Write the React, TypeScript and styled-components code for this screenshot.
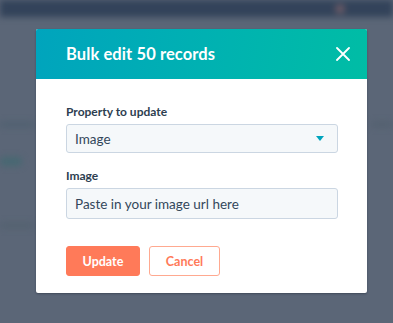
import React from "react";
import styled, { createGlobalStyle } from "styled-components";

const GlobalStyle = createGlobalStyle`
  html, body {
    margin: 0;
    padding: 0;
    background: #5b6677;
  }
  * {
    box-sizing: border-box;
  }
`;

const Screen = styled.div`
  position: relative;
  width: 393px;
  height: 323px;
  overflow: hidden;
  background: #5b6677;
  font-family: "Lato", "Noto Sans", sans-serif;
`;

const BackPage = styled.div`
  display: flex;
  flex-direction: column;
  filter: blur(3px);
`;

const NavBar = styled.div`
  height: 17px;
  background: #33435a;
  display: flex;
  justify-content: flex-end;
  align-items: center;
  padding-right: 48px;
`;

const NavDot = styled.div`
  width: 10px;
  height: 10px;
  border-radius: 50%;
  background: #6a5a66;
`;

const BackRow = styled.div<{ top: number }>`
  margin-top: ${(p) => p.top}px;
  display: flex;
  justify-content: space-between;
`;

const BackBar = styled.div<{ w: number; color: string; h?: number }>`
  width: ${(p) => p.w}px;
  height: ${(p) => p.h ?? 5}px;
  border-radius: 4px;
  background: ${(p) => p.color};
`;

const Overlay = styled.div`
  position: absolute;
  inset: 0;
  padding: 29px 0 0 36px;
`;

const Modal = styled.div`
  width: 331px;
  height: 264px;
  background: #ffffff;
  border-radius: 2px;
  overflow: hidden;
  box-shadow: 0 1px 2px rgba(30, 40, 55, 0.45);
  display: flex;
  flex-direction: column;
`;

const Header = styled.div`
  height: 50px;
  flex-shrink: 0;
  background: linear-gradient(100deg, #00a4bd 0%, #00b1b2 50%, #00bda5 100%);
  display: flex;
  align-items: center;
  justify-content: space-between;
  padding: 0 16px 0 30px;
`;

const Title = styled.h2`
  margin: 0;
  color: #ffffff;
  font-size: 16.5px;
  font-weight: 700;
  letter-spacing: 0.1px;
`;

const CloseButton = styled.button`
  border: none;
  background: transparent;
  padding: 0;
  width: 16px;
  height: 16px;
  display: flex;
  align-items: center;
  justify-content: center;
  cursor: pointer;
`;

const Body = styled.div`
  padding: 25px 29px 0 30px;
  display: flex;
  flex-direction: column;
`;

const Field = styled.div`
  display: flex;
  flex-direction: column;
  margin-bottom: 15px;
`;

const Label = styled.label`
  color: #2d3e50;
  font-size: 12px;
  font-weight: 700;
  margin-bottom: 5px;
  line-height: 15px;
`;

const Box = styled.div<{ h: number }>`
  height: ${(p) => p.h}px;
  background: #f5f8fa;
  border: 1px solid #cbd6e2;
  border-radius: 3px;
  display: flex;
  align-items: center;
  justify-content: space-between;
  padding: 0 11px 0 8px;
  color: #33475b;
  font-size: 13.5px;
`;

const Caret = styled.div`
  width: 0;
  height: 0;
  border-left: 4.5px solid transparent;
  border-right: 4.5px solid transparent;
  border-top: 5px solid #00a4bd;
  margin-right: 2px;
`;

const Actions = styled.div`
  display: flex;
  gap: 9px;
  margin-top: 12px;
`;

const Button = styled.button<{ primary?: boolean }>`
  height: 30px;
  padding: 0;
  width: ${(p) => (p.primary ? 74 : 71)}px;
  border-radius: 3px;
  font-family: "Lato", "Noto Sans", sans-serif;
  font-size: 12.5px;
  font-weight: 700;
  cursor: pointer;
  background: ${(p) => (p.primary ? "#ff7a59" : "#ffffff")};
  color: ${(p) => (p.primary ? "#ffffff" : "#ff7a59")};
  border: 1px solid ${(p) => (p.primary ? "#ff7a59" : "#ffa990")};
`;

const App: React.FC = () => {
  return (
    <>
      <GlobalStyle />
      <Screen>
        <BackPage>
          <NavBar>
            <NavDot />
          </NavBar>
          <BackRow top={105}>
            <BackBar w={34} color="#4f6070" />
            <BackBar w={22} color="#53606f" />
          </BackRow>
          <BackRow top={30}>
            <BackBar w={22} color="#476872" h={9} />
          </BackRow>
          <BackRow top={57}>
            <BackBar w={34} color="#53616f" />
          </BackRow>
        </BackPage>
        <Overlay>
          <Modal>
            <Header>
              <Title>Bulk edit 50 records</Title>
              <CloseButton aria-label="Close">
                <svg width="14" height="14" viewBox="0 0 14 14">
                  <path
                    d="M1 1 L13 13 M13 1 L1 13"
                    stroke="#ffffff"
                    strokeWidth="1.8"
                    strokeLinecap="round"
                  />
                </svg>
              </CloseButton>
            </Header>
            <Body>
              <Field>
                <Label>Property to update</Label>
                <Box h={29}>
                  <span>Image</span>
                  <Caret />
                </Box>
              </Field>
              <Field>
                <Label>Image</Label>
                <Box h={31}>
                  <span>Paste in your image url here</span>
                </Box>
              </Field>
              <Actions>
                <Button primary>Update</Button>
                <Button>Cancel</Button>
              </Actions>
            </Body>
          </Modal>
        </Overlay>
      </Screen>
    </>
  );
};

export default App;
